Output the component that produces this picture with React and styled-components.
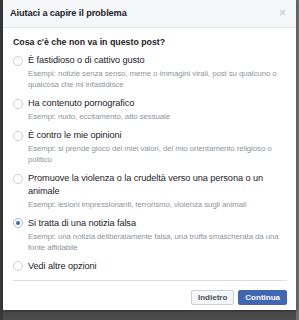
import React from "react";
import styled, { createGlobalStyle } from "styled-components";

const GlobalStyle = createGlobalStyle`
  html, body {
    margin: 0;
    padding: 0;
    background: #4a4a4a;
    font-family: "Liberation Sans", Arial, sans-serif;
  }
  * { box-sizing: border-box; }
`;

const Backdrop = styled.div`
  width: 299px;
  height: 320px;
  padding: 0 3px;
  background: linear-gradient(90deg, #3a3a3a 0 3px, #4a4a4a 3px 296px, #6e6e6e 296px);
  overflow: hidden;
`;

const Dialog = styled.div`
  width: 293px;
  background: #fff;
  display: flex;
  flex-direction: column;
  box-shadow: 0 1px 3px rgba(0, 0, 0, 0.4);
`;

const Header = styled.div`
  height: 28px;
  flex: none;
  display: flex;
  align-items: center;
  justify-content: space-between;
  padding: 0 10px 1px 7px;
  background: #f6f7f9;
  border-bottom: 1px solid #e5e5e5;
`;

const Title = styled.h2`
  margin: 0;
  font-size: 9.2px;
  letter-spacing: -0.1px;
  font-weight: bold;
  color: #1d2129;
`;

const Close = styled.span`
  font-size: 12px;
  color: #bec2c9;
  line-height: 1;
`;

const Body = styled.div`
  padding: 8px 7px 0 10px;
`;

const Question = styled.h3`
  margin: 0 0 6px 0;
  font-size: 8.8px;
  line-height: 12px;
  font-weight: bold;
  color: #1d2129;
`;

const Option = styled.div`
  display: flex;
  align-items: flex-start;
  padding-bottom: ${(p) => (p.$last ? 0 : 7)}px;
`;

const Radio = styled.span`
  flex: none;
  width: 10px;
  height: 10px;
  margin: 1.5px 5px 0 0;
  border-radius: 50%;
  border: 1px solid ${(p) => (p.$checked ? "#a8b7d6" : "#ccd0d5")};
  background: #fff;
  display: flex;
  align-items: center;
  justify-content: center;
  &::after {
    content: "";
    width: 4px;
    height: 4px;
    border-radius: 50%;
    background: ${(p) => (p.$checked ? "#4267b2" : "transparent")};
  }
`;

const OptionText = styled.div`
  flex: 1;
  min-width: 0;
`;

const Label = styled.div`
  font-size: 9.2px;
  letter-spacing: -0.08px;
  line-height: 12.5px;
  color: #1d2129;
`;

const Example = styled.div`
  margin-top: 1.5px;
  font-size: 7.9px;
  letter-spacing: -0.1px;
  line-height: 11px;
  color: #90949c;
`;

const Line = styled.span`
  display: block;
  white-space: nowrap;
`;

const Divider = styled.hr`
  margin: 8px 9px 0 10px;
  border: none;
  border-top: 1px solid #dddfe2;
`;

const Footer = styled.div`
  display: flex;
  justify-content: flex-end;
  gap: 4px;
  padding: 9px 9px 5px 0;
`;

const Button = styled.button`
  height: 15px;
  padding: 0 6px;
  font-family: inherit;
  font-size: 8px;
  font-weight: bold;
  border-radius: 2px;
  border: 1px solid ${(p) => (p.$primary ? "#4267b2" : "#ccd0d5")};
  background: ${(p) => (p.$primary ? "#4267b2" : "#f5f6f7")};
  color: ${(p) => (p.$primary ? "#fff" : "#4b4f56")};
`;

const options = [
  {
    label: ["È fastidioso o di cattivo gusto"],
    example: [
      "Esempi: notizie senza senso, meme o immagini virali, post su qualcuno o",
      "qualcosa che mi infastidisce",
    ],
  },
  {
    label: ["Ha contenuto pornografico"],
    example: ["Esempi: nudo, eccitamento, atto sessuale"],
  },
  {
    label: ["È contro le mie opinioni"],
    example: [
      "Esempi: si prende gioco dei miei valori, del mio orientamento religioso o",
      "politico",
    ],
  },
  {
    label: ["Promuove la violenza o la crudeltà verso una persona o un", "animale"],
    example: ["Esempi: lesioni impressionanti, terrorismo, violenza sugli animali"],
  },
  {
    label: ["Si tratta di una notizia falsa"],
    example: [
      "Esempi: una notizia deliberatamente falsa, una truffa smascherata da una",
      "fonte affidabile",
    ],
    checked: true,
  },
  { label: ["Vedi altre opzioni"] },
];

export default function App() {
  return (
    <>
      <GlobalStyle />
      <Backdrop>
        <Dialog>
          <Header>
            <Title>Aiutaci a capire il problema</Title>
            <Close>×</Close>
          </Header>
          <Body>
            <Question>Cosa c'è che non va in questo post?</Question>
            {options.map((o, i) => (
              <Option key={i} $last={i === options.length - 1}>
                <Radio $checked={o.checked} />
                <OptionText>
                  <Label>
                    {o.label.map((l) => (
                      <Line key={l}>{l}</Line>
                    ))}
                  </Label>
                  {o.example && (
                    <Example>
                      {o.example.map((l) => (
                        <Line key={l}>{l}</Line>
                      ))}
                    </Example>
                  )}
                </OptionText>
              </Option>
            ))}
          </Body>
          <Divider />
          <Footer>
            <Button>Indietro</Button>
            <Button $primary>Continua</Button>
          </Footer>
        </Dialog>
      </Backdrop>
    </>
  );
}
